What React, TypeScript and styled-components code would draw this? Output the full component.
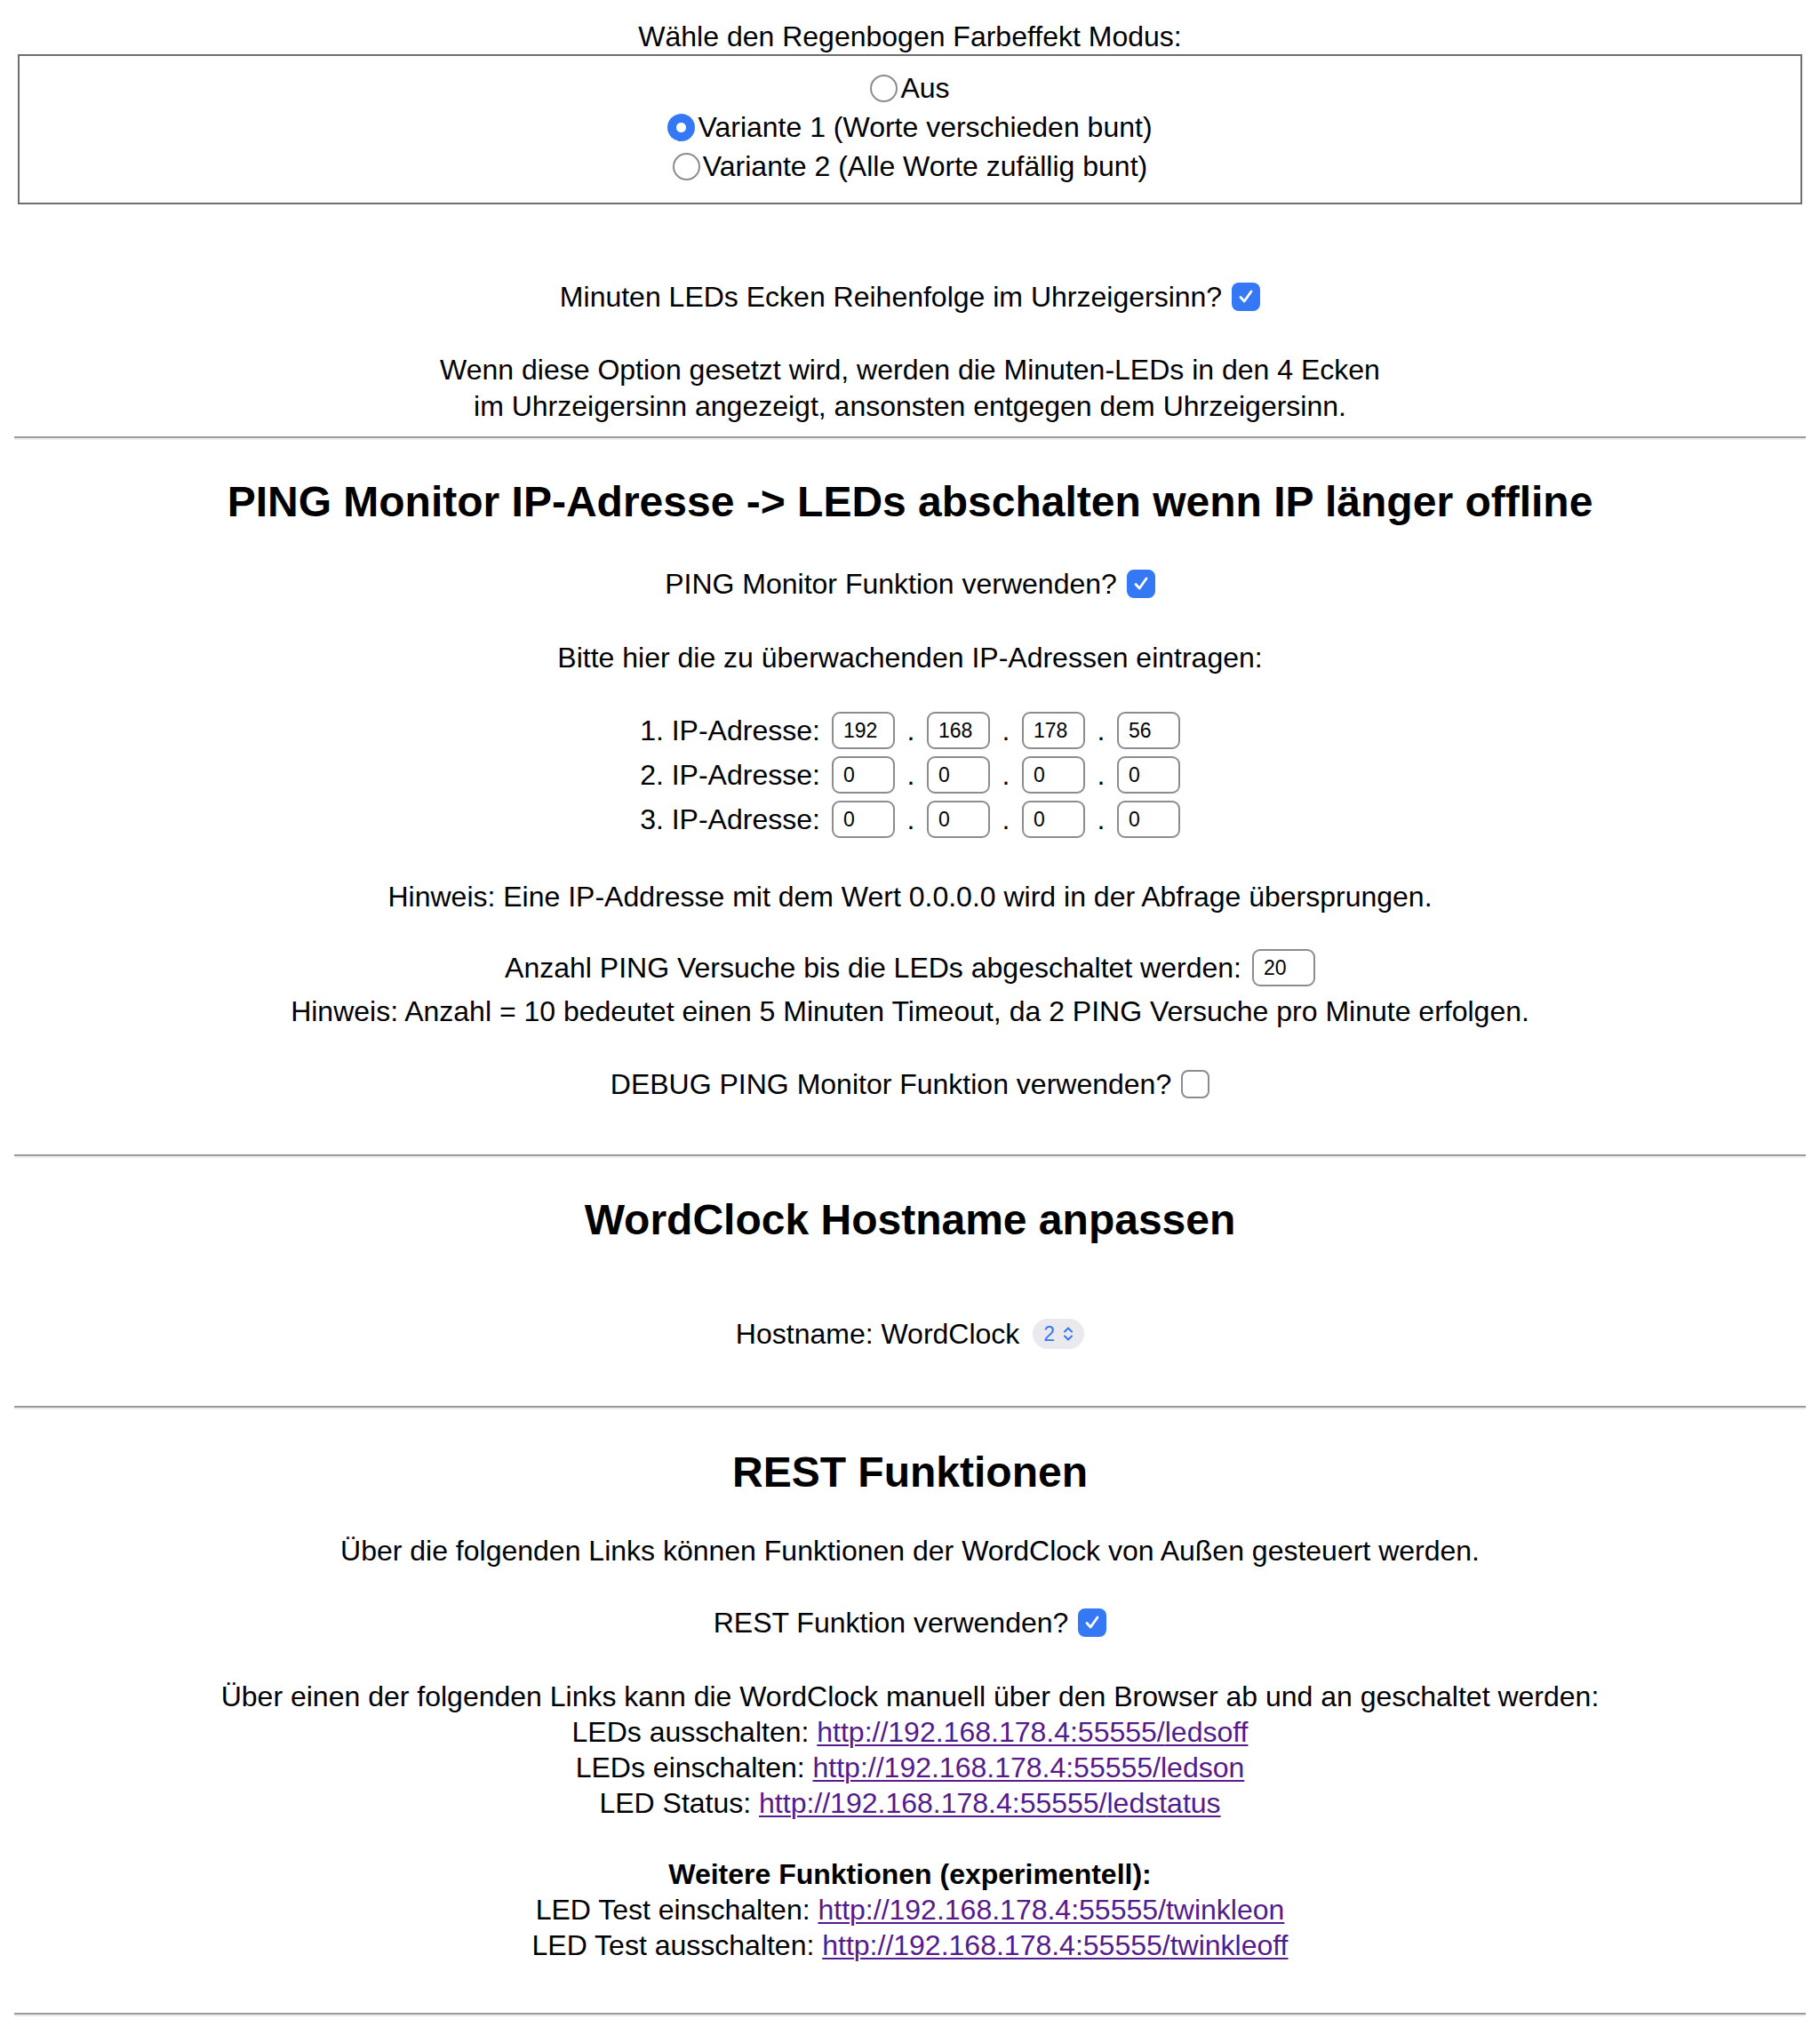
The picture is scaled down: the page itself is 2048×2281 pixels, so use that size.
import React from "react";
import styled, { createGlobalStyle } from "styled-components";

const Global = createGlobalStyle`
  html, body { background: #ffffff; }
  body {
    margin: 16px;
    font-family: "Liberation Sans", Arial, Helvetica, sans-serif;
    font-size: 32px;
    color: #000000;
  }
`;

const Page = styled.div`
  text-align: center;
`;

const Line = styled.div<{ $mt?: number; $lh?: number }>`
  margin-top: ${(p) => p.$mt ?? 0}px;
  line-height: ${(p) => p.$lh ?? 40}px;
`;

const Bold = styled.div<{ $mt?: number }>`
  margin-top: ${(p) => p.$mt ?? 0}px;
  line-height: 40px;
  font-weight: 700;
`;

const Box = styled.fieldset`
  margin: 0 4px;
  padding: 14px 24px 19px;
  border: 2px solid #6e6e6e;
  min-width: 0;
`;

const RadioLine = styled.label`
  display: flex;
  justify-content: center;
  align-items: center;
  height: 44px;
  line-height: 44px;
`;

const RadioMark = styled.span<{ $checked?: boolean }>`
  box-sizing: border-box;
  width: 31px;
  height: 31px;
  border-radius: 50%;
  margin-right: 3px;
  flex: none;
  border: ${(p) => (p.$checked ? "none" : "2px solid #8c8c8c")};
  background: ${(p) =>
    p.$checked
      ? "radial-gradient(circle, #ffffff 0 5px, #3478f6 6px)"
      : "#ffffff"};
`;

const Row = styled.div<{ $mt?: number; $h?: number }>`
  display: flex;
  justify-content: center;
  align-items: center;
  margin-top: ${(p) => p.$mt ?? 0}px;
  height: ${(p) => p.$h ?? 40}px;
`;

const Check = styled.span<{ $checked?: boolean }>`
  box-sizing: border-box;
  display: inline-flex;
  align-items: center;
  justify-content: center;
  width: 32px;
  height: 32px;
  margin-left: 11px;
  border-radius: 8px;
  flex: none;
  background: ${(p) => (p.$checked ? "#3478f6" : "#ffffff")};
  border: ${(p) => (p.$checked ? "none" : "2px solid #8c8c8c")};
`;

const Rule = styled.hr<{ $mt?: number }>`
  margin: ${(p) => p.$mt ?? 16}px 0 0;
  height: 0;
  border: none;
  border-top: 2px solid #9b9b9b;
  border-bottom: 2px solid #ececec;
`;

const Heading = styled.h2<{ $mt?: number }>`
  margin: ${(p) => p.$mt ?? 40}px 0 0;
  font-size: 48px;
  line-height: 56px;
  font-weight: 700;
`;

const IpRow = styled.div<{ $mt?: number }>`
  display: flex;
  justify-content: center;
  align-items: center;
  height: 50px;
  margin-top: ${(p) => p.$mt ?? 0}px;
`;

const IpLabel = styled.span`
  margin-right: 13px;
`;

const NumInput = styled.input`
  box-sizing: border-box;
  width: 71px;
  height: 42px;
  border: 2px solid #8c8c8c;
  border-radius: 9px;
  padding: 0 0 0 11px;
  margin: 0;
  font-family: "Liberation Sans", Arial, sans-serif;
  font-size: 23px;
  color: #000000;
  background: #ffffff;
  outline: none;
`;

const Dot = styled.span`
  width: 36px;
  text-align: center;
`;

const AfterLabel = styled.span`
  margin-right: 12px;
`;

const SelectPill = styled.span`
  display: inline-flex;
  align-items: center;
  gap: 9px;
  height: 34px;
  padding: 0 12px;
  margin-left: 15px;
  border-radius: 17px;
  background: #e9e9ee;
  color: #3478f6;
  font-size: 23px;
`;

const Link = styled.a`
  color: #551a8b;
  text-decoration: underline;
  text-decoration-thickness: 2px;
  text-underline-offset: 3px;
`;

const Tick = () => (
  <svg width="22" height="22" viewBox="0 0 22 22">
    <path
      d="M5 11.5 L9.2 16 L17 5"
      fill="none"
      stroke="#ffffff"
      strokeWidth="2.8"
      strokeLinecap="round"
      strokeLinejoin="round"
    />
  </svg>
);

const Chevrons = () => (
  <svg width="12" height="18" viewBox="0 0 12 18">
    <path
      d="M2 6.5 L6 2.5 L10 6.5 M2 11.5 L6 15.5 L10 11.5"
      fill="none"
      stroke="#3478f6"
      strokeWidth="2"
      strokeLinecap="round"
      strokeLinejoin="round"
    />
  </svg>
);

const CheckRow = ({ label, checked, mt }: { label: string; checked: boolean; mt: number }) => (
  <Row $mt={mt}>
    <span>{label}</span>
    <Check $checked={checked}>{checked ? <Tick /> : null}</Check>
  </Row>
);

const IpLine = ({ n, parts, mt }: { n: number; parts: string[]; mt?: number }) => (
  <IpRow $mt={mt}>
    <IpLabel>{n}. IP-Adresse:</IpLabel>
    {parts.map((v, i) => (
      <React.Fragment key={i}>
        {i > 0 ? <Dot>.</Dot> : null}
        <NumInput type="text" defaultValue={v} />
      </React.Fragment>
    ))}
  </IpRow>
);

const base = "http://192.168.178.4:55555/";

export default function App() {
  return (
    <Page>
      <Global />
      <Line $mt={5}>Wähle den Regenbogen Farbeffekt Modus:</Line>
      <Box>
        <RadioLine>
          <RadioMark />
          Aus
        </RadioLine>
        <RadioLine>
          <RadioMark $checked />
          Variante 1 (Worte verschieden bunt)
        </RadioLine>
        <RadioLine>
          <RadioMark />
          Variante 2 (Alle Worte zufällig bunt)
        </RadioLine>
      </Box>

      <CheckRow mt={84} label="Minuten LEDs Ecken Reihenfolge im Uhrzeigersinn?" checked />
      <Line $mt={42} $lh={41}>
        Wenn diese Option gesetzt wird, werden die Minuten-LEDs in den 4 Ecken
        <br />
        im Uhrzeigersinn angezeigt, ansonsten entgegen dem Uhrzeigersinn.
      </Line>
      <Rule $mt={13} />

      <Heading $mt={42}>PING Monitor IP-Adresse -&gt; LEDs abschalten wenn IP länger offline</Heading>
      <CheckRow mt={44} label="PING Monitor Funktion verwenden?" checked />
      <Line $mt={43}>Bitte hier die zu überwachenden IP-Adressen eintragen:</Line>
      <IpLine n={1} parts={["192", "168", "178", "56"]} mt={37} />
      <IpLine n={2} parts={["0", "0", "0", "0"]} />
      <IpLine n={3} parts={["0", "0", "0", "0"]} />
      <Line $mt={42}>Hinweis: Eine IP-Addresse mit dem Wert 0.0.0.0 wird in der Abfrage übersprungen.</Line>
      <Row $mt={38} $h={44}>
        <AfterLabel>Anzahl PING Versuche bis die LEDs abgeschaltet werden:</AfterLabel>
        <NumInput type="text" defaultValue="20" />
      </Row>
      <Line $mt={7}>
        Hinweis: Anzahl = 10 bedeutet einen 5 Minuten Timeout, da 2 PING Versuche pro Minute erfolgen.
      </Line>
      <CheckRow mt={42} label="DEBUG PING Monitor Funktion verwenden?" checked={false} />
      <Rule $mt={59} />

      <Heading $mt={42}>WordClock Hostname anpassen</Heading>
      <Row $mt={80}>
        <span>Hostname: WordClock</span>
        <SelectPill>
          2
          <Chevrons />
        </SelectPill>
      </Row>
      <Rule $mt={61} />

      <Heading $mt={43}>REST Funktionen</Heading>
      <Line $mt={40}>Über die folgenden Links können Funktionen der WordClock von Außen gesteuert werden.</Line>
      <CheckRow mt={41} label="REST Funktion verwenden?" checked />
      <Line $mt={43}>
        Über einen der folgenden Links kann die WordClock manuell über den Browser ab und an geschaltet werden:
        <br />
        LEDs ausschalten: <Link href={base + "ledsoff"}>{base}ledsoff</Link>
        <br />
        LEDs einschalten: <Link href={base + "ledson"}>{base}ledson</Link>
        <br />
        LED Status: <Link href={base + "ledstatus"}>{base}ledstatus</Link>
      </Line>
      <Bold $mt={40}>Weitere Funktionen (experimentell):</Bold>
      <Line>
        LED Test einschalten: <Link href={base + "twinkleon"}>{base}twinkleon</Link>
        <br />
        LED Test ausschalten: <Link href={base + "twinkleoff"}>{base}twinkleoff</Link>
      </Line>
      <Rule $mt={56} />
    </Page>
  );
}
